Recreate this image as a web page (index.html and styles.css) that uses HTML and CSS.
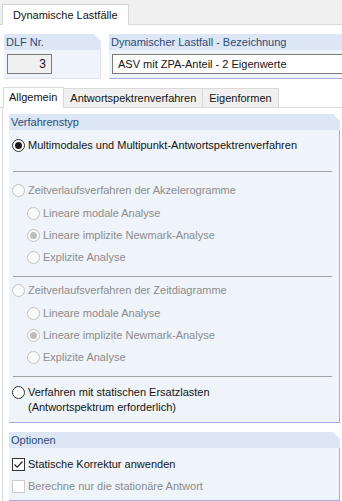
FILE: index.html
```html
<!DOCTYPE html>
<html lang="de">
<head>
    <meta charset="UTF-8">
    <meta name="viewport" content="width=device-width, initial-scale=1.0">
    <title>Dynamische Lastfälle</title>
    <link rel="stylesheet" href="styles.css">
</head>
<body>
    <!-- Obere Registerkarte -->
    <div class="top-tabs">
        <div class="top-tab">Dynamische Lastfälle</div>
    </div>

    <!-- Kopfzeile: Nummer und Bezeichnung -->
    <div class="head-row">
        <div class="group group-dlf">
            <div class="group-title">DLF Nr.</div>
            <div class="group-body">
                <div class="num-field">3</div>
            </div>
        </div>
        <div class="group group-name">
            <div class="group-title">Dynamischer Lastfall - Bezeichnung</div>
            <div class="group-body">
                <div class="text-field">ASV mit ZPA-Anteil - 2 Eigenwerte</div>
            </div>
        </div>
    </div>

    <!-- Registerkarten -->
    <div class="tabs">
        <div class="tab active">Allgemein</div>
        <div class="tab">Antwortspektrenverfahren</div>
        <div class="tab">Eigenformen</div>
    </div>

    <div class="panel">
        <div class="group group-wide">
            <div class="group-title">Verfahrenstyp</div>
            <div class="group-body method-body">
                <div class="option first">
                    <span class="radio checked"></span>
                    <span>Multimodales und Multipunkt-Antwortspektrenverfahren</span>
                </div>
                <div class="sep sep-first"></div>

                <div class="option disabled head-akz">
                    <span class="radio"></span>
                    <span>Zeitverlaufsverfahren der Akzelerogramme</span>
                </div>
                <div class="sub-options">
                    <div class="option disabled"><span class="radio"></span><span>Lineare modale Analyse</span></div>
                    <div class="option disabled"><span class="radio checked"></span><span>Lineare implizite Newmark-Analyse</span></div>
                    <div class="option disabled"><span class="radio"></span><span>Explizite Analyse</span></div>
                </div>
                <div class="sep"></div>

                <div class="option disabled head-zeit">
                    <span class="radio"></span>
                    <span>Zeitverlaufsverfahren der Zeitdiagramme</span>
                </div>
                <div class="sub-options">
                    <div class="option disabled"><span class="radio"></span><span>Lineare modale Analyse</span></div>
                    <div class="option disabled"><span class="radio checked"></span><span>Lineare implizite Newmark-Analyse</span></div>
                    <div class="option disabled"><span class="radio"></span><span>Explizite Analyse</span></div>
                </div>
                <div class="sep"></div>

                <div class="option multi">
                    <span class="radio"></span>
                    <span>Verfahren mit statischen Ersatzlasten<br>(Antwortspektrum erforderlich)</span>
                </div>
            </div>
        </div>

        <div class="group group-wide">
            <div class="group-title">Optionen</div>
            <div class="group-body options-body">
                <div class="option">
                    <span class="check checked">
                        <svg viewBox="0 0 13 13" width="13" height="13"><path d="M2.5 6.5 L5.2 9.2 L10.5 3.5" fill="none" stroke="#222" stroke-width="1.2"/></svg>
                    </span>
                    <span>Statische Korrektur anwenden</span>
                </div>
                <div class="option disabled">
                    <span class="check"></span>
                    <span>Berechne nur die stationäre Antwort</span>
                </div>
            </div>
        </div>
    </div>
</body>
</html>
```

FILE: styles.css
```css
/* Grundlayout */
body {
    margin: 0;
    width: 342px;
    height: 501px;
    overflow: hidden;
    background-color: #ffffff;
    font-family: 'Liberation Sans', Arial, sans-serif;
    font-size: 11px;
    color: #141414;
}

.top-tabs {
    height: 24px;
    background-color: #f0f0f0;
    border-bottom: 1px solid #dadada;
    display: flex;
    align-items: flex-end;
    padding-left: 2px;
}

.top-tab {
    height: 20px;
    line-height: 20px;
    padding: 0 10px 0 10px;
    background-color: #ffffff;
    border: 1px solid #d6d6d6;
    border-bottom: none;
    margin-bottom: -1px;
}

/* Gruppen */
.head-row {
    display: flex;
    gap: 8px;
    padding: 9px 0 0 4px;
}

.group-title {
    height: 16px;
    line-height: 16px;
    padding-left: 2px;
    background-color: #dce6f4;
    color: #2b4b7a;
    clip-path: polygon(0 0, calc(100% - 7px) 0, 100% 7px, 100% 100%, 0 100%);
}

.group-body {
    background-color: #eff3fa;
}

.group-dlf {
    width: 97px;
}

.group-dlf .group-body {
    height: 24px;
    padding: 4px 0 0 3px;
    border-right: 1px solid #dfe3f0;
    border-bottom: 1px solid #dfe3f0;
}

.group-name {
    flex: 1;
}

.group-name .group-title {
    clip-path: none;
}

.group-name .group-body {
    height: 24px;
    padding: 4px 0 0 3px;
    border-bottom: 1px solid #a9a9e6;
}

.num-field {
    width: 38px;
    height: 18px;
    line-height: 18px;
    padding-right: 5px;
    border: 1px solid #7a7a7a;
    background-color: #f0f0f0;
    text-align: right;
    font-size: 12px;
}

.text-field {
    height: 18px;
    line-height: 18px;
    border: 1px solid #7a7a7a;
    border-right: none;
    background-color: #ffffff;
    padding-left: 5px;
}

/* Registerkarten */
.tabs {
    display: flex;
    align-items: flex-end;
    margin-top: 9px;
    padding-left: 3px;
    height: 19px;
    border-bottom: 1px solid #d9d9d9;
}

.tab {
    height: 18px;
    line-height: 18px;
    padding: 0 6px;
    background-color: #f0f0f0;
    border: 1px solid #d9d9d9;
    border-bottom: none;
    border-left: none;
}

.tab.active {
    height: 20px;
    line-height: 19px;
    padding: 0 6px 0 5px;
    background-color: #ffffff;
    border-left: 1px solid #d9d9d9;
    margin-bottom: -1px;
}

.panel {
    margin-left: 2px;
    border-left: 1px solid #d9d9d9;
    padding: 6px 0 0 6px;
    height: 400px;
}

.group-wide {
    width: 331px;
}

.group-wide .group-body {
    border-right: 1px solid #a9a9e6;
    border-bottom: 1px solid #a9a9e6;
}

.method-body {
    height: 288px;
    padding: 4px 4px 0 3px;
}

.options-body {
    height: 47px;
    padding: 5px 4px 0 3px;
}

.group-wide + .group-wide {
    margin-top: 9px;
}

/* Optionen */
.option {
    display: flex;
    align-items: center;
    gap: 3px;
    height: 22px;
}

.option.disabled {
    color: #8c8c8c;
}

.head-akz {
    margin-top: 7px;
}

.head-zeit {
    margin-top: 2px;
}

.option.multi {
    align-items: flex-start;
    height: auto;
    line-height: 15px;
    margin-top: 8px;
}

.option.multi .radio {
    margin-top: 1px;
}

.sub-options {
    padding-left: 15px;
    margin-top: 1px;
}

.sep {
    height: 1px;
    background-color: #a0a0a0;
    margin: 8px 3px 0 1px;
}

.sep-first {
    margin-top: 15px;
}

.radio {
    width: 11px;
    height: 11px;
    border: 1px solid #333333;
    border-radius: 50%;
    background-color: #ffffff;
    display: flex;
    align-items: center;
    justify-content: center;
    flex-shrink: 0;
}

.radio.checked::after {
    content: "";
    width: 7px;
    height: 7px;
    border-radius: 50%;
    background-color: #1a1a1a;
}

.disabled .radio {
    border-color: #c2c2c2;
    background-color: #fafafa;
}

.disabled .radio.checked::after {
    background-color: #bdbdbd;
}

.check {
    width: 13px;
    height: 13px;
    box-sizing: border-box;
    border: 1px solid #333333;
    background-color: #ffffff;
    flex-shrink: 0;
    position: relative;
}

.check svg {
    position: absolute;
    left: -1px;
    top: -1px;
}

.disabled .check {
    border-color: #cccccc;
}
```
